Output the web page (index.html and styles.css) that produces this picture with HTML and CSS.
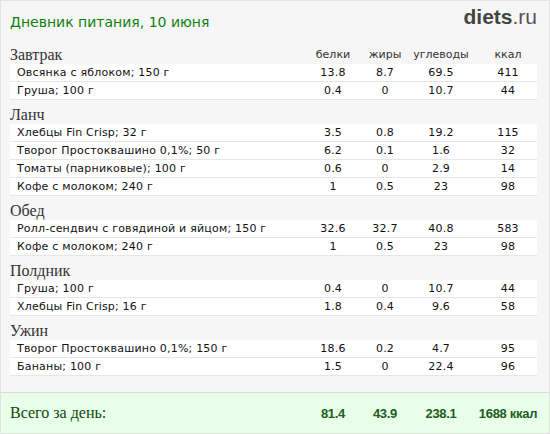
FILE: index.html
```html
<!DOCTYPE html>
<html lang="ru">
<head>
<meta charset="utf-8"/>
<title>Дневник питания, 10 июня</title>
<link rel="stylesheet" href="styles.css">
</head>
<body>
<div class="page">
<header class="top">
<h1>Дневник питания, 10 июня</h1>
<div class="logo"><b>diets</b>.ru</div>
</header>
<div class="diary">
<div class="meal">
<div class="meal-head grid">
<div class="meal-name">Завтрак</div>
<div>белки</div><div>жиры</div><div>углеводы</div><div class="kcal">ккал</div>
</div>
<div class="row grid"><div class="food">Овсянка с яблоком; 150 г</div><div>13.8</div><div>8.7</div><div>69.5</div><div class="kcal">411</div></div>
<div class="row grid"><div class="food">Груша; 100 г</div><div>0.4</div><div>0</div><div>10.7</div><div class="kcal">44</div></div>
</div>
<div class="meal">
<div class="meal-head grid"><div class="meal-name">Ланч</div></div>
<div class="row grid"><div class="food">Хлебцы Fin Crisp; 32 г</div><div>3.5</div><div>0.8</div><div>19.2</div><div class="kcal">115</div></div>
<div class="row grid"><div class="food">Творог Простоквашино 0,1%; 50 г</div><div>6.2</div><div>0.1</div><div>1.6</div><div class="kcal">32</div></div>
<div class="row grid"><div class="food">Томаты (парниковые); 100 г</div><div>0.6</div><div>0</div><div>2.9</div><div class="kcal">14</div></div>
<div class="row grid"><div class="food">Кофе с молоком; 240 г</div><div>1</div><div>0.5</div><div>23</div><div class="kcal">98</div></div>
</div>
<div class="meal">
<div class="meal-head grid"><div class="meal-name">Обед</div></div>
<div class="row grid"><div class="food">Ролл-сендвич с говядиной и яйцом; 150 г</div><div>32.6</div><div>32.7</div><div>40.8</div><div class="kcal">583</div></div>
<div class="row grid"><div class="food">Кофе с молоком; 240 г</div><div>1</div><div>0.5</div><div>23</div><div class="kcal">98</div></div>
</div>
<div class="meal">
<div class="meal-head grid"><div class="meal-name">Полдник</div></div>
<div class="row grid"><div class="food">Груша; 100 г</div><div>0.4</div><div>0</div><div>10.7</div><div class="kcal">44</div></div>
<div class="row grid"><div class="food">Хлебцы Fin Crisp; 16 г</div><div>1.8</div><div>0.4</div><div>9.6</div><div class="kcal">58</div></div>
</div>
<div class="meal">
<div class="meal-head grid"><div class="meal-name">Ужин</div></div>
<div class="row grid"><div class="food">Творог Простоквашино 0,1%; 150 г</div><div>18.6</div><div>0.2</div><div>4.7</div><div class="kcal">95</div></div>
<div class="row grid"><div class="food">Бананы; 100 г</div><div>1.5</div><div>0</div><div>22.4</div><div class="kcal">96</div></div>
</div>
</div>
<footer class="total">
<div class="grid">
<div class="total-name">Всего за день:</div>
<div>81.4</div><div>43.9</div><div>238.1</div><div class="kcal">1688 ккал</div>
</div>
</footer>
</div>
</body>
</html>
```

FILE: styles.css
```css
body {
  margin: 0;
  background: #ffffff;
  font-family: "DejaVu Sans", Verdana, sans-serif;
  color: #111;
}
.page {
  box-sizing: border-box;
  width: 550px;
  height: 434px;
  background: #f6f6f6;
  border: 1px solid #e2e2e2;
  display: flex;
  flex-direction: column;
}
.top {
  height: 39px;
  display: flex;
  align-items: center;
  justify-content: space-between;
  padding: 0 12px 0 9px;
}
.top h1 {
  margin: 0;
  font-size: 14px;
  font-weight: normal;
  color: #0f7f0f;
  padding-top: 2px;
}
.logo {
  font-family: "Liberation Sans", Arial, sans-serif;
  font-size: 21px;
  color: #555;
  padding-bottom: 8px;
}
.logo b {
  color: #444;
  font-weight: 700;
}
.diary {
  padding: 0 12px 0 9px;
}
.grid {
  display: grid;
  grid-template-columns: 1fr 52px 52px 60px 66px;
  justify-items: center;
  align-items: center;
}
.grid > div:first-child {
  justify-self: start;
}
.kcal {
  padding-left: 8px;
  white-space: nowrap;
}
.meal-head {
  height: 24px;
  box-sizing: border-box;
  padding-top: 6px;
  line-height: 18px;
  font-size: 11px;
  color: #333;
}
.meal-name {
  font-family: "Liberation Serif", "Times New Roman", serif;
  font-size: 16px;
  color: #333;
}
.row {
  height: 17px;
  background: #fff;
  border-bottom: 1px solid #e6e6e6;
  font-size: 11px;
  letter-spacing: 0.2px;
  color: #111;
}
.food {
  padding-left: 7px;
}
.total {
  margin-top: auto;
  height: 40px;
  border-top: 1px solid #dcdcdc;
  background: #eaffea;
  padding: 0 12px 0 9px;
  display: flex;
  flex-direction: column;
  justify-content: center;
}
.total .grid {
  font-family: "Liberation Sans", Arial, sans-serif;
  font-weight: bold;
  font-size: 13px;
  color: #1b5e1b;
  letter-spacing: -0.3px;
}
.total-name {
  font-family: "Liberation Serif", "Times New Roman", serif;
  font-weight: normal;
  font-size: 16px;
  color: #0b4a0b;
  letter-spacing: 0;
}
```
